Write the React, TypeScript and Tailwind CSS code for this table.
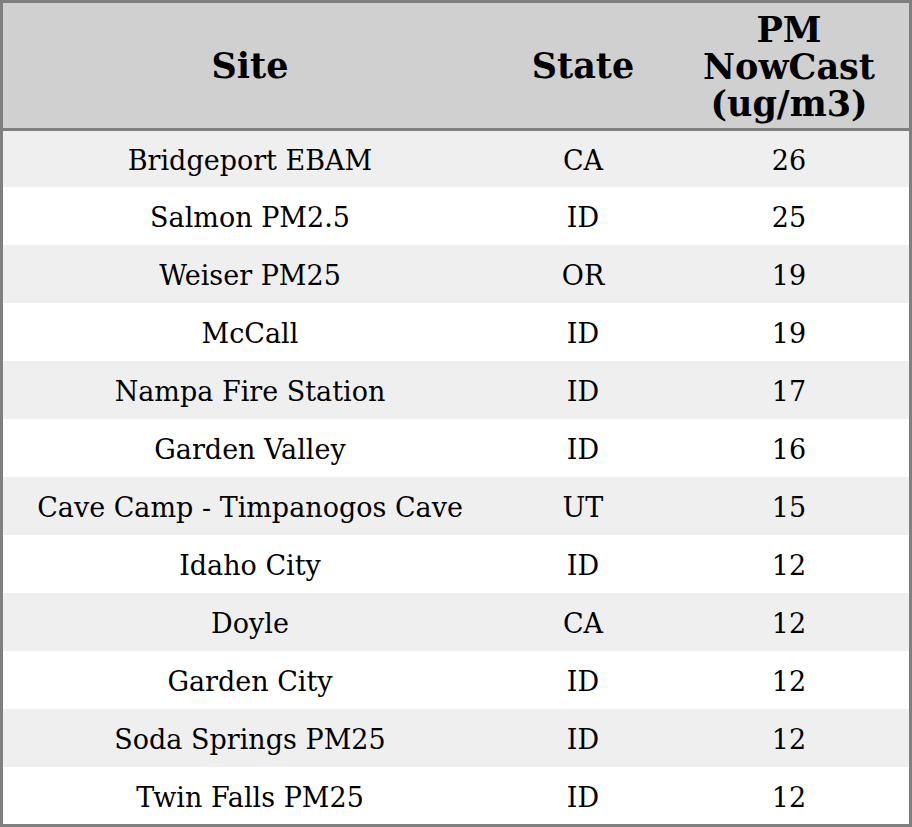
import React from "react";

const rows: [string, string, string][] = [
  ["Bridgeport EBAM", "CA", "26"],
  ["Salmon PM2.5", "ID", "25"],
  ["Weiser PM25", "OR", "19"],
  ["McCall", "ID", "19"],
  ["Nampa Fire Station", "ID", "17"],
  ["Garden Valley", "ID", "16"],
  ["Cave Camp - Timpanogos Cave", "UT", "15"],
  ["Idaho City", "ID", "12"],
  ["Doyle", "CA", "12"],
  ["Garden City", "ID", "12"],
  ["Soda Springs PM25", "ID", "12"],
  ["Twin Falls PM25", "ID", "12"],
];

export default function App() {
  return (
    <div
      className="w-[912px] h-[827px] border-[3px] border-[#808080] flex flex-col text-black bg-white"
      style={{ fontFamily: '"DejaVu Serif", serif' }}
    >
      <div className="h-[128px] shrink-0 bg-[#d0d0d0] border-b-[3px] border-[#808080] flex items-center font-bold text-[35px] leading-[37px]">
        <div className="w-[494px] text-center">Site</div>
        <div className="w-[172px] text-center">State</div>
        <div className="flex-1 text-center pt-[2px]">
          PM
          <br />
          NowCast
          <br />
          (ug/m3)
        </div>
      </div>
      {rows.map((r, i) => (
        <div
          key={i}
          className={`flex items-center pt-[5px] text-[27px] ${
            i === 0 ? "h-[56px] shrink-0" : i === rows.length - 1 ? "flex-1" : "h-[58px] shrink-0"
          } ${i % 2 === 0 ? "bg-[#efefef]" : "bg-white"}`}
        >
          <div className="w-[494px] text-center">{r[0]}</div>
          <div className="w-[172px] text-center">{r[1]}</div>
          <div className="flex-1 text-center">{r[2]}</div>
        </div>
      ))}
    </div>
  );
}
